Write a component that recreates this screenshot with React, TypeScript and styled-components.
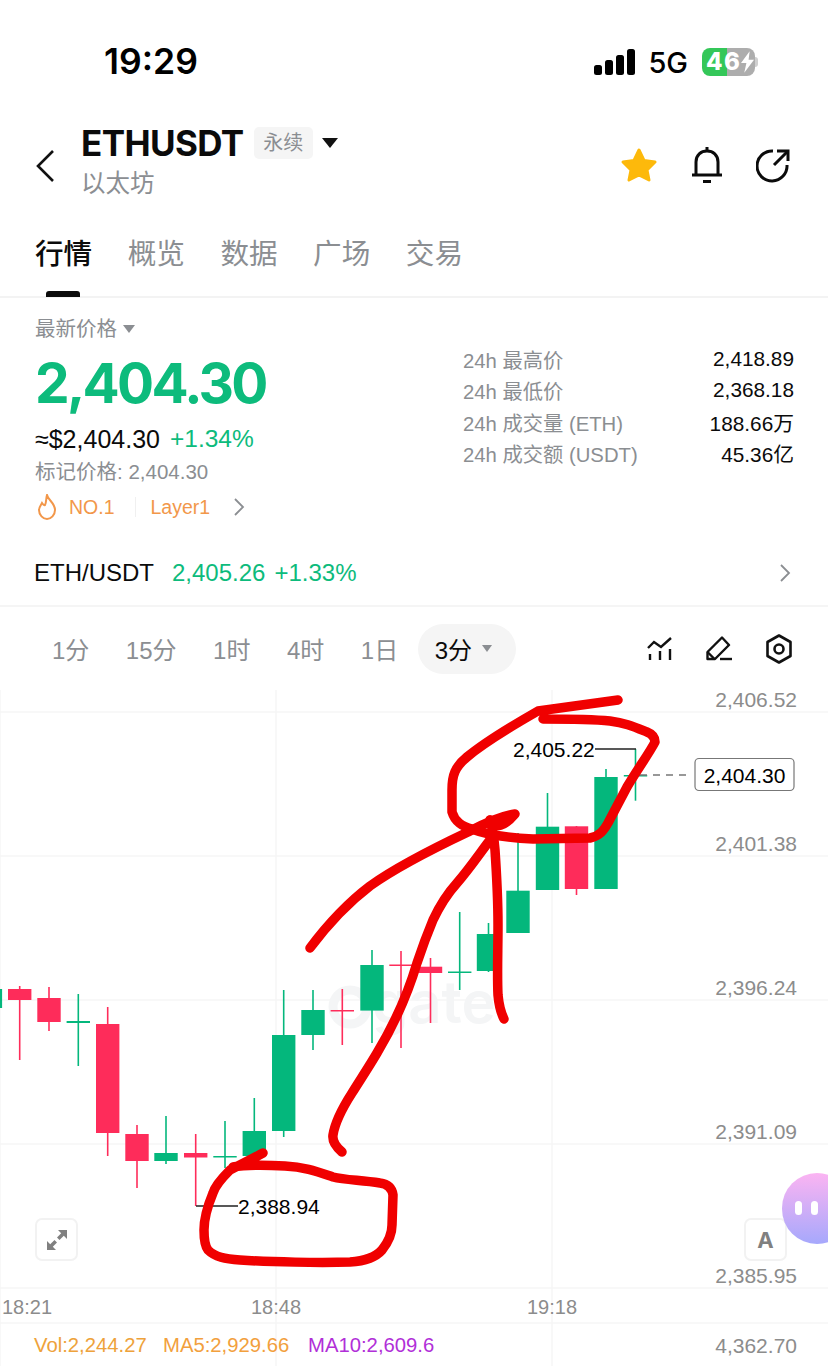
import React from "react";
import styled, { createGlobalStyle } from "styled-components";

const GlobalStyle = createGlobalStyle`
  html, body {
    margin: 0;
    background: #fff;
    font-family: "Liberation Sans", "Noto Sans CJK SC", sans-serif;
  }
`;

const GRAY = "#8b8e92";
const GREEN = "#0dbb7c";
const RED = "#fe2c5a";
const ORANGE = "#f2974a";

const Page = styled.div`
  width: 828px;
  height: 1366px;
  overflow: hidden;
  background: #fff;
  display: flex;
  flex-direction: column;
`;

const StatusBar = styled.div`
  height: 126px;
  flex: none;
  display: flex;
  align-items: flex-start;
  justify-content: space-between;
  padding: 42px 73px 0 104px;
  box-sizing: border-box;
`;

const Clock = styled.div`
  font-family: Inter, sans-serif;
  font-size: 35.5px;
  line-height: 40px;
  font-weight: 600;
  color: #000;
`;

const StatusRight = styled.div`
  display: flex;
  align-items: center;
  height: 40px;
  gap: 14px;
`;

const NetLabel = styled.span`
  font-family: Inter, sans-serif;
  font-size: 29px;
  font-weight: 500;
  color: #000;
  margin-left: -2px;
`;

const Battery = styled.div`
  width: 53px;
  height: 28px;
  border-radius: 8px;
  position: relative;
  background: linear-gradient(90deg, #34c759 0 47%, #adadad 47% 100%);
  color: #fff;
  font-family: Inter, sans-serif;
  font-size: 24px;
  line-height: 28px;
  font-weight: 800;
  letter-spacing: 1.5px;
  padding-left: 4px;
  box-sizing: border-box;

  &::after {
    content: "";
    position: absolute;
    right: -3px;
    top: 9px;
    width: 3px;
    height: 10px;
    border-radius: 0 3px 3px 0;
    background: #cfcfcf;
  }
`;

const BatteryBolt = styled.svg`
  position: absolute;
  right: 1px;
  top: 3px;
`;

const Header = styled.div`
  height: 74px;
  flex: none;
  display: flex;
  align-items: center;
  padding: 0 38px 0 36px;
`;

const BackIcon = styled.svg`
  flex: none;
  margin: 5px 26px 0 0;
`;

const TitleBlock = styled.div`
  flex: 1;
  display: flex;
  flex-direction: column;
`;

const TitleRow = styled.div`
  display: flex;
  align-items: center;
  height: 34px;
  margin-top: -2px;
`;

const Symbol = styled.div`
  font-family: Inter, sans-serif;
  font-size: 35px;
  font-weight: 700;
  letter-spacing: -0.6px;
  color: #0b0b0b;
`;

const PerpTag = styled.div`
  margin: 0 9px 0 10px;
  width: 59px;
  height: 32px;
  border-radius: 5px;
  background: #f5f5f5;
  color: ${GRAY};
  font-size: 20px;
  line-height: 32px;
  text-align: center;
`;

const Caret = styled.div<{ $size: number; $color: string }>`
  width: 0;
  height: 0;
  border-left: ${(p) => p.$size}px solid transparent;
  border-right: ${(p) => p.$size}px solid transparent;
  border-top: ${(p) => Math.round(p.$size * 1.3)}px solid ${(p) => p.$color};
`;

const SubTitle = styled.div`
  margin-top: 9px;
  font-size: 24.5px;
  line-height: 30px;
  color: ${GRAY};
`;

const HeaderIcons = styled.div`
  display: flex;
  align-items: center;
  gap: 32px;
  margin-top: 4px;
`;

const Tabs = styled.div`
  flex: none;
  height: 98px;
  display: flex;
  gap: 35.5px;
  padding: 34px 0 0 35px;
  box-sizing: border-box;
  border-bottom: 2px solid #f3f3f3;
`;

const Tab = styled.div<{ $active?: boolean }>`
  position: relative;
  font-size: 28.6px;
  line-height: 40px;
  font-weight: ${(p) => (p.$active ? 500 : 400)};
  color: ${(p) => (p.$active ? "#0b0b0b" : GRAY)};
  ${(p) =>
    p.$active &&
    `&::after {
      content: "";
      position: absolute;
      left: 11px;
      top: 57px;
      width: 34px;
      height: 6px;
      border-radius: 3px 3px 0 0;
      background: #0b0b0b;
    }`}
`;

const Summary = styled.div`
  flex: none;
  height: 236px;
  display: flex;
  justify-content: space-between;
  padding: 0 34px 0 35px;
`;

const PriceColumn = styled.div`
  display: flex;
  flex-direction: column;
  padding-top: 18px;
`;

const PriceCaption = styled.div`
  display: flex;
  align-items: center;
  gap: 6px;
  font-size: 20.5px;
  line-height: 26px;
  color: ${GRAY};
`;

const BigPrice = styled.div`
  margin-top: 5px;
  font-family: Inter, sans-serif;
  font-size: 55px;
  line-height: 72px;
  font-weight: 700;
  letter-spacing: -2.7px;
  color: ${GREEN};
`;

const FiatRow = styled.div`
  margin-top: 3px;
  display: flex;
  gap: 10px;
  font-size: 25px;
  line-height: 34px;
  color: #0b0b0b;
`;

const Change = styled.span`
  color: ${GREEN};
  font-size: 24.5px;
`;

const MarkPrice = styled.div`
  font-size: 20.5px;
  line-height: 32px;
  color: ${GRAY};
`;

const TagRow = styled.div`
  height: 38px;
  display: flex;
  align-items: center;
  padding-left: 2px;
  font-size: 19.5px;
  color: ${ORANGE};
`;

const FlameIcon = styled.svg`
  margin: 0 13px 0 1px;
`;

const TagChevron = styled.svg`
  margin-left: 23px;
`;

const TagDivider = styled.span`
  width: 1px;
  height: 20px;
  background: #f0f0f0;
  margin: 0 15px 0 20px;
`;

const Stats = styled.div`
  width: 331px;
  display: grid;
  grid-template-columns: 1fr auto;
  grid-auto-rows: 31.3px;
  align-items: center;
  padding-top: 45.5px;
`;

const StatLabel = styled.div`
  color: ${GRAY};
  font-size: 20.3px;
`;

const StatValue = styled.div`
  color: #0b0b0b;
  font-size: 20.8px;
  text-align: right;
`;

const SpotRow = styled.div`
  flex: none;
  height: 73px;
  display: flex;
  align-items: center;
  gap: 18px;
  padding: 7px 37px 0 34px;
  box-sizing: border-box;
  border-bottom: 2px solid #f5f5f5;
  font-size: 24px;
`;

const SpotName = styled.div`
  color: #0b0b0b;
`;

const SpotPrice = styled.div`
  flex: 1;
  display: flex;
  gap: 9px;
  color: ${GREEN};
`;

const Toolbar = styled.div`
  flex: none;
  height: 83px;
  display: flex;
  align-items: center;
  padding: 0 36px 0 52px;
  box-sizing: border-box;
`;

const Interval = styled.div<{ $active?: boolean }>`
  display: flex;
  align-items: center;
  gap: 10px;
  font-size: 24px;
  color: ${(p) => (p.$active ? "#0b0b0b" : GRAY)};
  margin-right: 36.5px;
  ${(p) =>
    p.$active &&
    `
    margin: 0 0 0 -17px;
    padding: 0 24px 0 17px;
    height: 50px;
    border-radius: 25px;
    background: #f5f5f5;
  `}
`;

const ToolIcons = styled.div`
  margin-left: auto;
  display: flex;
  align-items: center;
  gap: 33px;
`;

const Chart = styled.div`
  position: relative;
  flex: none;
  height: 676px;
`;

const ChartCanvas = styled.svg`
  display: block;
  overflow: visible;
  font-family: "Liberation Sans", sans-serif;
`;

const ChartButton = styled.div<{ $left: number }>`
  position: absolute;
  left: ${(p) => p.$left}px;
  top: 528px;
  width: 39px;
  height: 39px;
  border: 2px solid #f2f2f2;
  border-radius: 7px;
  background: #fff;
  display: flex;
  align-items: center;
  justify-content: center;
  font-family: Inter, sans-serif;
  font-size: 22px;
  font-weight: 700;
  color: #808080;
`;

const AssistantBubble = styled.div`
  position: absolute;
  left: 782px;
  top: 483px;
  width: 70px;
  height: 71px;
  border-radius: 36px;
  background: linear-gradient(180deg, #fbb4f2, #a6a8fc);
  display: flex;
  gap: 9px;
  padding: 28px 0 0 13px;
  box-sizing: border-box;
`;

const BubbleEye = styled.span`
  width: 7px;
  height: 14px;
  border-radius: 4px;
  background: #fff;
`;

// candles: x centre, wick top, wick bottom, body top, body bottom (page y)
const candles: [number, number, number, number, number, "g" | "r"][] = [
  [-9.6, 975, 1030, 989, 1008, "g"],
  [19.7, 986, 1060, 989, 1000, "r"],
  [49, 987, 1031, 998, 1022, "r"],
  [78.3, 994, 1066, 1021, 1023, "g"],
  [107.7, 1007, 1156, 1024, 1133, "r"],
  [137, 1125, 1188, 1134, 1161, "r"],
  [166, 1116, 1164, 1153, 1161, "g"],
  [195.7, 1134, 1206, 1153, 1157.5, "r"],
  [225, 1121, 1168, 1156, 1157.5, "g"],
  [254.3, 1098, 1156, 1131, 1156, "g"],
  [283.7, 990, 1137, 1035, 1131, "g"],
  [313, 990, 1050, 1010, 1035, "g"],
  [342.3, 989, 1045, 1010, 1011.5, "r"],
  [372, 950, 1043, 965, 1010.6, "g"],
  [401, 951, 1048, 964.5, 966, "r"],
  [430.5, 958, 1023, 966.7, 973, "r"],
  [459.7, 912, 990, 971.5, 973, "g"],
  [488.5, 923, 972, 934, 971, "g"],
  [518, 833, 933, 890.7, 933, "g"],
  [547.5, 793, 890, 826.7, 890, "g"],
  [576.5, 826, 895, 826.3, 889, "r"],
  [606, 769, 889, 777, 889, "g"],
  [635.5, 749, 800.7, 775, 776.5, "g"],
];

const axisLabels: [string, number][] = [
  ["2,406.52", 700],
  ["2,401.38", 844],
  ["2,396.24", 988],
  ["2,391.09", 1132],
  ["2,385.95", 1276],
  ["4,362.70", 1346],
];

const strokes = [
  "M618 700 L538 711 C510 727 485 742 467 757 C455 767 452 775 452 790 L452 812 C455 822 462 826 472 829 C490 836 510 838 533 839 L590 838 C600 836 604 830 608 823 L627 787 C637 770 650 752 655 742 C655 737 652 734 647 732 C632 726 625 723 610 721 C590 719 565 719 543 719",
  "M310 948 C325 928 345 905 370 886 C395 868 430 850 468 832 C485 823 500 816 515 814 C505 826 495 830 490 820",
  "M342 1152 C336 1147 332 1142 333 1135 C335 1122 343 1107 352 1093 C362 1077 370 1065 377 1053 C392 1028 406 1000 417 963 C423 945 428 932 433 920 C440 905 448 893 457 883 C470 868 480 853 490 840",
  "M490 820 C493 830 494 838 495 850 C497 880 498 900 498 925 C498 950 497 975 498 995 C499 1006 501 1013 504 1019",
  "M263 1153 C250 1160 240 1165 230 1170 C222 1178 215 1186 213 1193 C208 1205 204 1216 204 1230 C204 1240 205 1246 208 1250 C215 1257 225 1259 240 1260 C270 1262 320 1263 350 1262 C365 1261 375 1258 382 1250 C390 1240 392 1232 392 1225 L393 1195 C392 1188 388 1184 380 1183 C360 1180 345 1180 333 1177 C318 1172 305 1167 285 1166 C265 1165 245 1165 233 1167",
];

function CandleChart() {
  return (
    <ChartCanvas width={828} height={676} viewBox="0 690 828 676">
      {[712, 856, 1000, 1144, 1288, 1323].map((y) => (
        <line key={y} x1={0} x2={828} y1={y} y2={y} stroke="#f6f6f6" strokeWidth={1.5} />
      ))}
      {[0, 276, 552].map((x) => (
        <line key={x} x1={x} x2={x} y1={690} y2={1366} stroke="#f6f6f6" strokeWidth={1.5} />
      ))}
      <circle cx={350} cy={1007} r={17} fill="none" stroke="#f4f5f6" strokeWidth={9} />
      <text x={372} y={1023} fontSize={58} fontWeight={600} fontFamily="Inter, sans-serif" fill="#f4f5f6">
        gate
      </text>

      {candles.map(([x, top, bottom, bodyTop, bodyBottom, side]) => {
        const color = side === "g" ? "#04b77c" : RED;
        return (
          <g key={x}>
            <line x1={x} x2={x} y1={top} y2={bottom} stroke={color} strokeWidth={1.6} />
            <rect x={x - 11.7} y={bodyTop} width={23.4} height={bodyBottom - bodyTop} fill={color} />
          </g>
        );
      })}

      <path d="M595 749 H636 M196 1206 H238" stroke="#222" strokeWidth={1.4} fill="none" />
      <text x={513} y={757} fontSize={21} fill="#000">2,405.22</text>
      <text x={238} y={1214} fontSize={21} fill="#000">2,388.94</text>

      <line x1={640} x2={690} y1={775} y2={775} stroke="#777" strokeWidth={1.3} strokeDasharray="7 6" />
      <rect x={695} y={758.5} width={99} height={32} rx={4} fill="#fff" stroke="#777" strokeWidth={1.2} />
      <text x={744.5} y={782.5} fontSize={21} textAnchor="middle" fill="#000">2,404.30</text>

      {axisLabels.map(([label, y]) => (
        <text key={label} x={797} y={y + 7} fontSize={21} textAnchor="end" fill="#8c8c8c">
          {label}
        </text>
      ))}
      <text x={2} y={1314} fontSize={20} fill="#8c8c8c">18:21</text>
      <text x={276} y={1314} fontSize={20} fill="#8c8c8c" textAnchor="middle">18:48</text>
      <text x={552} y={1314} fontSize={20} fill="#8c8c8c" textAnchor="middle">19:18</text>

      <text x={34} y={1352} fontSize={20.3} fill="#eea23b">Vol:2,244.27</text>
      <text x={163} y={1352} fontSize={20.3} fill="#f2a03d">MA5:2,929.66</text>
      <text x={308} y={1352} fontSize={20.3} fill="#b12fd8">MA10:2,609.6</text>

      {strokes.map((d) => (
        <path key={d} d={d} fill="none" stroke="#f00000" strokeWidth={9.5} strokeLinecap="round" strokeLinejoin="round" />
      ))}
    </ChartCanvas>
  );
}

export default function App() {
  return (
    <Page>
      <GlobalStyle />
      <StatusBar>
        <Clock>19:29</Clock>
        <StatusRight>
          <svg width="42" height="26" viewBox="0 0 42 26" fill="#000">
            <rect x="0" y="16" width="8" height="10" rx="2.5" />
            <rect x="11" y="11" width="8" height="15" rx="2.5" />
            <rect x="22" y="6" width="8" height="20" rx="2.5" />
            <rect x="33" y="0" width="8" height="26" rx="2.5" />
          </svg>
          <NetLabel>5G</NetLabel>
          <Battery>
            46
            <BatteryBolt width="13" height="22" viewBox="0 0 12 20" fill="#fff">
              <path d="M8 0 L0 11 H5 L3 20 L12 8 H7 Z" />
            </BatteryBolt>
          </Battery>
        </StatusRight>
      </StatusBar>

      <Header>
        <BackIcon width="19" height="32" viewBox="0 0 19 32" fill="none" stroke="#111" strokeWidth="2.6">
          <path d="M17 1 L2 16 L17 31" />
        </BackIcon>
        <TitleBlock>
          <TitleRow>
            <Symbol>ETHUSDT</Symbol>
            <PerpTag>永续</PerpTag>
            <Caret $size={8} $color="#111" />
          </TitleRow>
          <SubTitle>以太坊</SubTitle>
        </TitleBlock>
        <HeaderIcons>
          <svg width="38" height="36" viewBox="0 0 38 36">
            <path
              d="M19 3 L24 13.5 L35 15 L27 23 L29 33 L19 28 L9 33 L11 23 L3 15 L14 13.5 Z"
              fill="#fdb90b"
              stroke="#fdb90b"
              strokeWidth="3"
              strokeLinejoin="round"
            />
          </svg>
          <svg width="34" height="38" viewBox="0 0 34 38" fill="none" stroke="#0b0b0b" strokeWidth="3">
            <path d="M2 29 H32" />
            <path d="M6 29 V16 C6 9 11 5 17 5 C23 5 28 9 28 16 V29" />
            <path d="M17 1 V5" />
            <path d="M13 35.5 H21" />
          </svg>
          <svg width="34" height="36" viewBox="0 0 34 36" fill="none" stroke="#0b0b0b" strokeWidth="3">
            <path d="M31 18 A15 15 0 1 1 17 4" />
            <path d="M18 18 L31 5" />
            <path d="M21 4 H32 V14" />
          </svg>
        </HeaderIcons>
      </Header>

      <Tabs>
        <Tab $active>行情</Tab>
        <Tab>概览</Tab>
        <Tab>数据</Tab>
        <Tab>广场</Tab>
        <Tab>交易</Tab>
      </Tabs>

      <Summary>
        <PriceColumn>
          <PriceCaption>
            最新价格
            <Caret $size={6} $color={GRAY} />
          </PriceCaption>
          <BigPrice>2,404.30</BigPrice>
          <FiatRow>
            ≈$2,404.30 <Change>+1.34%</Change>
          </FiatRow>
          <MarkPrice>标记价格: 2,404.30</MarkPrice>
          <TagRow>
            <FlameIcon width="18" height="26" viewBox="0 0 18 26" fill="none" stroke={ORANGE} strokeWidth="2">
              <path d="M9 1 C10 6 17 9 17 16 C17 21 13 25 9 25 C5 25 1 21 1 16 C1 13 3 11 4 9 C5 10.5 6 11.5 7 11 C8.5 8 8 4 9 1 Z" />
            </FlameIcon>
            NO.1
            <TagDivider />
            Layer1
            <TagChevron width="12" height="18" viewBox="0 0 12 18" fill="none" stroke="#8b8e92" strokeWidth="1.8">
              <path d="M2 1 L10 9 L2 17" />
            </TagChevron>
          </TagRow>
        </PriceColumn>
        <Stats>
          <StatLabel>24h 最高价</StatLabel>
          <StatValue>2,418.89</StatValue>
          <StatLabel>24h 最低价</StatLabel>
          <StatValue>2,368.18</StatValue>
          <StatLabel>24h 成交量 (ETH)</StatLabel>
          <StatValue>188.66万</StatValue>
          <StatLabel>24h 成交额 (USDT)</StatLabel>
          <StatValue>45.36亿</StatValue>
        </Stats>
      </Summary>

      <SpotRow>
        <SpotName>ETH/USDT</SpotName>
        <SpotPrice>
          <span>2,405.26</span>
          <span>+1.33%</span>
        </SpotPrice>
        <svg width="12" height="18" viewBox="0 0 12 18" fill="none" stroke="#8b8e92" strokeWidth="1.8">
          <path d="M2 1 L10 9 L2 17" />
        </svg>
      </SpotRow>

      <Toolbar>
        <Interval>1分</Interval>
        <Interval>15分</Interval>
        <Interval>1时</Interval>
        <Interval>4时</Interval>
        <Interval>1日</Interval>
        <Interval $active>
          3分
          <Caret $size={5} $color={GRAY} />
        </Interval>
        <ToolIcons>
          <svg width="26" height="24" viewBox="0 0 26 24" fill="none" stroke="#111" strokeWidth="2.4">
            <path d="M1 11 L7 5 L14 10 L24 1" />
            <path d="M3 17 V23 M13 14 V23 M23 12 V23" />
          </svg>
          <svg width="27" height="25" viewBox="0 0 27 25" fill="none" stroke="#111" strokeWidth="2.4" strokeLinejoin="round">
            <path d="M16 1.5 L23 9 L9 23 H1.5 V16 Z" />
            <path d="M1.5 16 L8.5 23" />
            <path d="M14 23 H26" />
          </svg>
          <svg width="26" height="30" viewBox="0 0 26 30" fill="none" stroke="#111" strokeWidth="2.6" strokeLinejoin="round">
            <path d="M13 1.5 L24.5 8 V22 L13 28.5 L1.5 22 V8 Z" />
            <circle cx="13" cy="15" r="4.5" />
          </svg>
        </ToolIcons>
      </Toolbar>

      <Chart>
        <CandleChart />
        <ChartButton $left={35}>
          <svg width="22" height="22" viewBox="0 0 22 22" fill="#808080">
            <path d="M12 1 H21 V10 L17.8 6.8 L13.5 11 L11 8.5 L15.2 4.2 Z" />
            <path d="M10 21 H1 V12 L4.2 15.2 L8.5 11 L11 13.5 L6.8 17.8 Z" />
          </svg>
        </ChartButton>
        <ChartButton $left={744}>A</ChartButton>
        <AssistantBubble>
          <BubbleEye />
          <BubbleEye />
        </AssistantBubble>
      </Chart>
    </Page>
  );
}
